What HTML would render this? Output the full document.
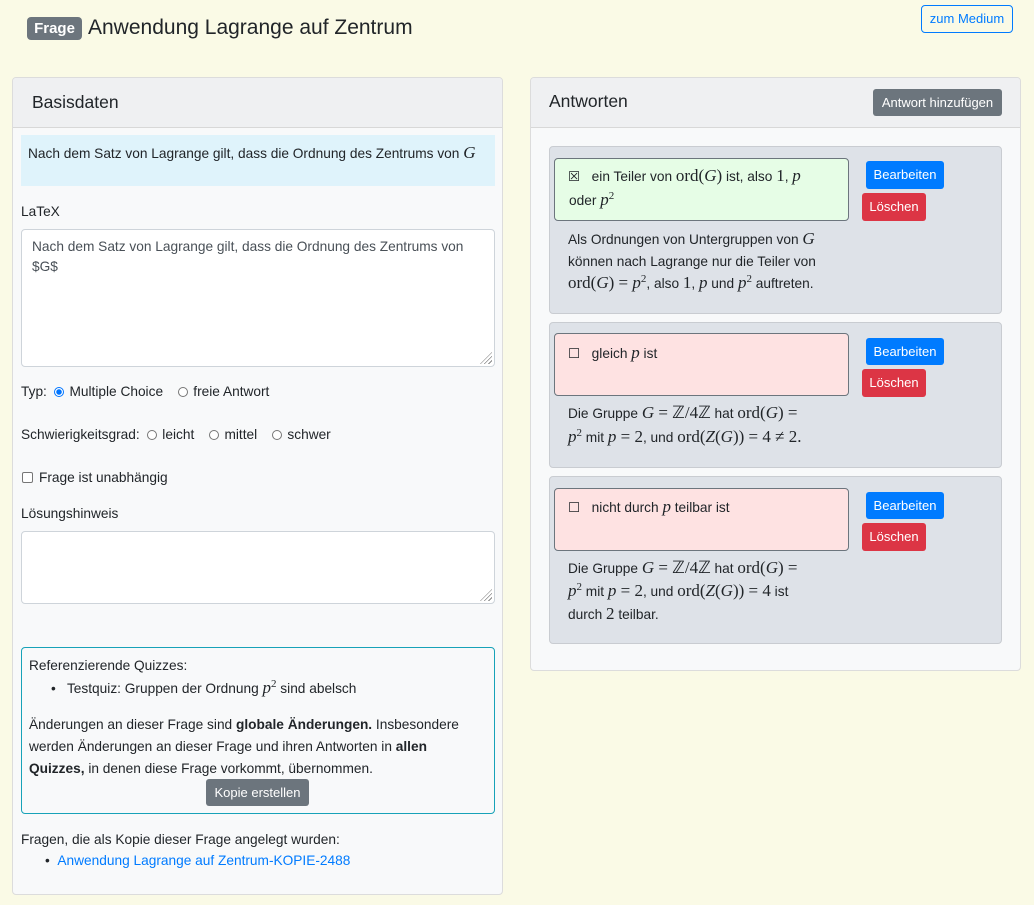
<!DOCTYPE html>
<html><head><meta charset="utf-8"><style>
*{box-sizing:border-box;margin:0;padding:0}
body{width:1034px;height:905px;background:#fafae6;font-family:"Liberation Sans",sans-serif;color:#212529;position:relative;overflow:hidden}
.a{position:absolute}
.t{position:absolute;white-space:nowrap;font-size:13.7px;line-height:16px;height:16px}
.m{font-family:"Liberation Serif",serif;font-style:italic;font-size:17px}
.r{font-family:"Liberation Serif",serif;font-size:17px}
sup{font-family:"Liberation Serif",serif;font-size:11px;vertical-align:6px;line-height:0}
.card{position:absolute;background:#f8f9fa;border:1px solid #dcdcdc;border-radius:4px;overflow:hidden}
.hd{position:absolute;left:0;right:0;top:0;height:50px;background:#eff0f2;border-bottom:1px solid #d8d8d8}
.btn{position:absolute;border-radius:3px;color:#fff;font-size:13px;text-align:center;white-space:nowrap}
.ta{position:absolute;background:#fff;border:1px solid #ced4da;border-radius:4px}
.grip{position:absolute;right:2px;bottom:2px;width:12px;height:12px;background:repeating-linear-gradient(135deg,transparent 0 2px,#888 2px 3px);clip-path:polygon(100% 0,100% 100%,0 100%)}
.rad{display:inline-block;width:10px;height:10px;border:1px solid #767676;border-radius:50%;vertical-align:-1px;margin-right:5px;background:#fff}
.rad.on{border-color:#0075ff;background:radial-gradient(circle,#0075ff 0 2.5px,#fff 3px)}
.ans{position:absolute;left:549px;width:453px;background:#dee2e8;border:1px solid #c9ccd1;border-radius:4px}
.ib{position:absolute;left:554px;width:295px;height:63px;border:1px solid #6c757d;border-radius:4px}
.blue{background:#007bff}.red{background:#dc3545}.gray{background:#6c757d}
</style></head><body>
<div class="a gray" style="left:27px;top:17px;width:55px;height:23px;border-radius:4px;color:#fff;font-weight:bold;font-size:15px;line-height:23px;text-align:center">Frage</div>
<div class="t" style="left:88px;top:15px;font-size:21px;line-height:26px;height:26px">Anwendung Lagrange auf Zentrum</div>
<div class="a" style="left:921px;top:5px;width:92px;height:28px;border:1px solid #007bff;border-radius:4px;color:#007bff;font-size:13px;line-height:26px;text-align:center">zum Medium</div>

<div class="card" style="left:12px;top:77px;width:491px;height:818px">
<div class="hd"></div>
<div class="t" style="left:19px;top:13px;font-size:17.5px;line-height:22px;height:22px">Basisdaten</div>
</div>
<div class="a" style="left:21px;top:135px;width:474px;height:51px;background:#dff3fb"></div>
<div class="t" style="left:28px;top:145px">Nach dem Satz von Lagrange gilt, dass die Ordnung des Zentrums von <span class="m">G</span></div>
<div class="t" style="left:21px;top:204px">LaTeX</div>
<div class="ta" style="left:21px;top:229px;width:474px;height:138px"><div class="grip"></div></div>
<div class="t" style="left:32px;top:239px;color:#495057">Nach dem Satz von Lagrange gilt, dass die Ordnung des Zentrums von</div>
<div class="t" style="left:32px;top:259px;color:#495057">$G$</div>
<div class="t" style="left:21px;top:384px">Typ:&nbsp; <span class="rad on"></span>Multiple Choice &nbsp;&nbsp; <span class="rad"></span>freie Antwort</div>
<div class="t" style="left:21px;top:427px">Schwierigkeitsgrad:&nbsp; <span class="rad"></span>leicht &nbsp;&nbsp; <span class="rad"></span>mittel &nbsp;&nbsp; <span class="rad"></span>schwer</div>
<div class="a" style="left:22px;top:472px;width:11px;height:11px;border:1px solid #767676;border-radius:2px;background:#fff"></div>
<div class="t" style="left:39px;top:470px">Frage ist unabhängig</div>
<div class="t" style="left:21px;top:506px">Lösungshinweis</div>
<div class="ta" style="left:21px;top:531px;width:474px;height:73px"><div class="grip"></div></div>

<div class="a" style="left:21px;top:647px;width:474px;height:167px;border:1px solid #17a2b8;border-radius:4px"></div>
<div class="t" style="left:29px;top:658px">Referenzierende Quizzes:</div>
<div class="t" style="left:51px;top:680px">•&nbsp;&nbsp; Testquiz: Gruppen der Ordnung <span class="m">p</span><sup>2</sup> sind abelsch</div>
<div class="t" style="left:29px;top:717px">Änderungen an dieser Frage sind <b>globale Änderungen.</b> Insbesondere</div>
<div class="t" style="left:29px;top:739px">werden Änderungen an dieser Frage und ihren Antworten in <b>allen</b></div>
<div class="t" style="left:29px;top:761px"><b>Quizzes,</b> in denen diese Frage vorkommt, übernommen.</div>
<div class="btn gray" style="left:206px;top:779px;width:103px;height:27px;line-height:27px">Kopie erstellen</div>
<div class="t" style="left:21px;top:832px">Fragen, die als Kopie dieser Frage angelegt wurden:</div>
<div class="t" style="left:45px;top:853px">•&nbsp;&nbsp;<span style="color:#007bff">Anwendung Lagrange auf Zentrum-KOPIE-2488</span></div>

<div class="card" style="left:530px;top:77px;width:491px;height:594px">
<div class="hd"></div>
<div class="t" style="left:18px;top:12px;font-size:17.5px;line-height:22px;height:22px">Antworten</div>
</div>
<div class="btn gray" style="left:873px;top:89px;width:129px;height:27px;line-height:27px">Antwort hinzufügen</div>

<div class="ans" style="top:146px;height:168px"></div>
<div class="ib" style="top:158px;background:#e6fde6"></div>
<div class="t" style="left:568px;top:168px">☒&nbsp;&nbsp; ein Teiler von <span class="r">ord(</span><span class="m">G</span><span class="r">)</span> ist, also <span class="r">1</span>, <span class="m">p</span></div>
<div class="t" style="left:569px;top:192px">oder <span class="m">p</span><sup>2</sup></div>
<div class="btn blue" style="left:866px;top:161px;width:78px;height:28px;line-height:28px">Bearbeiten</div>
<div class="btn red" style="left:862px;top:193px;width:64px;height:28px;line-height:28px">Löschen</div>
<div class="t" style="left:568px;top:231px">Als Ordnungen von Untergruppen von <span class="m">G</span></div>
<div class="t" style="left:568px;top:254px">können nach Lagrange nur die Teiler von</div>
<div class="t" style="left:568px;top:275px"><span class="r">ord(</span><span class="m">G</span><span class="r">) = </span><span class="m">p</span><sup>2</sup>, also <span class="r">1</span>, <span class="m">p</span> und <span class="m">p</span><sup>2</sup> auftreten.</div>

<div class="ans" style="top:322px;height:146px"></div>
<div class="ib" style="top:333px;background:#fee2e2"></div>
<div class="t" style="left:568px;top:345px">☐&nbsp;&nbsp; gleich <span class="m">p</span> ist</div>
<div class="btn blue" style="left:866px;top:338px;width:78px;height:27px;line-height:27px">Bearbeiten</div>
<div class="btn red" style="left:862px;top:369px;width:64px;height:28px;line-height:28px">Löschen</div>
<div class="t" style="left:568px;top:405px">Die Gruppe <span class="m">G</span><span class="r"> = ℤ/4ℤ</span> hat <span class="r">ord(</span><span class="m">G</span><span class="r">) =</span></div>
<div class="t" style="left:568px;top:429px"><span class="m">p</span><sup>2</sup> mit <span class="m">p</span><span class="r"> = 2</span>, und <span class="r">ord(</span><span class="m">Z</span><span class="r">(</span><span class="m">G</span><span class="r">)) = 4 ≠ 2.</span></div>

<div class="ans" style="top:476px;height:168px"></div>
<div class="ib" style="top:488px;background:#fee2e2"></div>
<div class="t" style="left:568px;top:499px">☐&nbsp;&nbsp; nicht durch <span class="m">p</span> teilbar ist</div>
<div class="btn blue" style="left:866px;top:492px;width:78px;height:27px;line-height:27px">Bearbeiten</div>
<div class="btn red" style="left:862px;top:523px;width:64px;height:28px;line-height:28px">Löschen</div>
<div class="t" style="left:568px;top:560px">Die Gruppe <span class="m">G</span><span class="r"> = ℤ/4ℤ</span> hat <span class="r">ord(</span><span class="m">G</span><span class="r">) =</span></div>
<div class="t" style="left:568px;top:583px"><span class="m">p</span><sup>2</sup> mit <span class="m">p</span><span class="r"> = 2</span>, und <span class="r">ord(</span><span class="m">Z</span><span class="r">(</span><span class="m">G</span><span class="r">)) = 4</span> ist</div>
<div class="t" style="left:568px;top:606px">durch <span class="r">2</span> teilbar.</div>
</body></html>
